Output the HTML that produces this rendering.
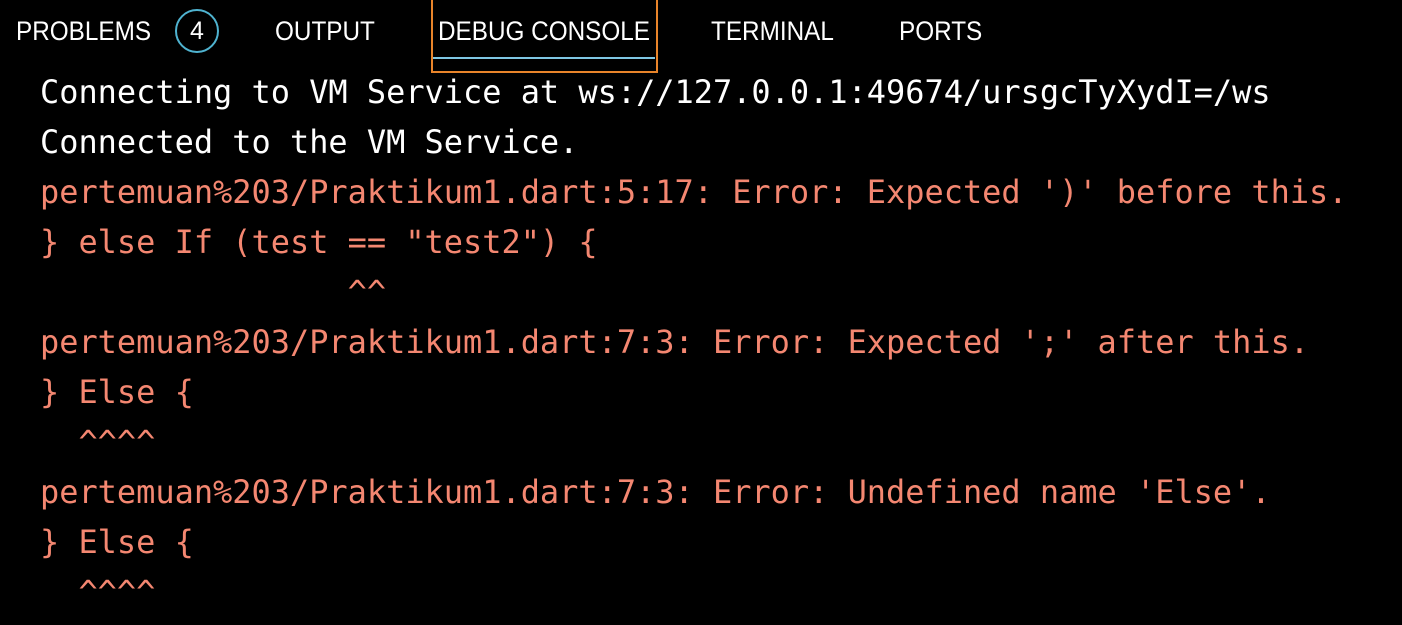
<!DOCTYPE html>
<html><head><style>
body{margin:0;width:1402px;height:625px;background:#000;overflow:hidden;position:relative;font-family:"Liberation Sans",sans-serif;color:#fff}
.t{position:absolute;top:15px;font-size:27px;line-height:32px;transform-origin:0 0;transform:scaleX(0.9);white-space:nowrap}
.badge{position:absolute;left:175px;top:9px;width:40px;height:40px;border:2px solid #4fb3d0;border-radius:50%;text-align:center;line-height:40px;font-size:25px}
.box{position:absolute;left:431px;top:-4px;width:223px;height:73px;border:2px solid #e8842a}
.ul{position:absolute;left:433px;top:57px;width:222px;height:2px;background:#7ec6e3}
.c{position:absolute;left:40px;top:67px;font-family:"DejaVu Sans Mono","Liberation Mono",monospace;font-size:31.95px;line-height:50px;white-space:pre;margin:0}
.r{color:#f48771}
</style></head><body>
<div class="t" style="left:16px">PROBLEMS</div>
<div class="badge">4</div>
<div class="t" style="left:275px">OUTPUT</div>
<div class="box"></div><div class="ul"></div>
<div class="t" style="left:438px">DEBUG CONSOLE</div>
<div class="t" style="left:711px">TERMINAL</div>
<div class="t" style="left:899px">PORTS</div>
<pre class="c">Connecting to VM Service at ws://127.0.0.1:49674/ursgcTyXydI=/ws
Connected to the VM Service.
<span class="r">pertemuan%203/Praktikum1.dart:5:17: Error: Expected ')' before this.
} else If (test == "test2") {
                ^^
pertemuan%203/Praktikum1.dart:7:3: Error: Expected ';' after this.
} Else {
  ^^^^
pertemuan%203/Praktikum1.dart:7:3: Error: Undefined name 'Else'.
} Else {
  ^^^^</span></pre>
</body></html>
